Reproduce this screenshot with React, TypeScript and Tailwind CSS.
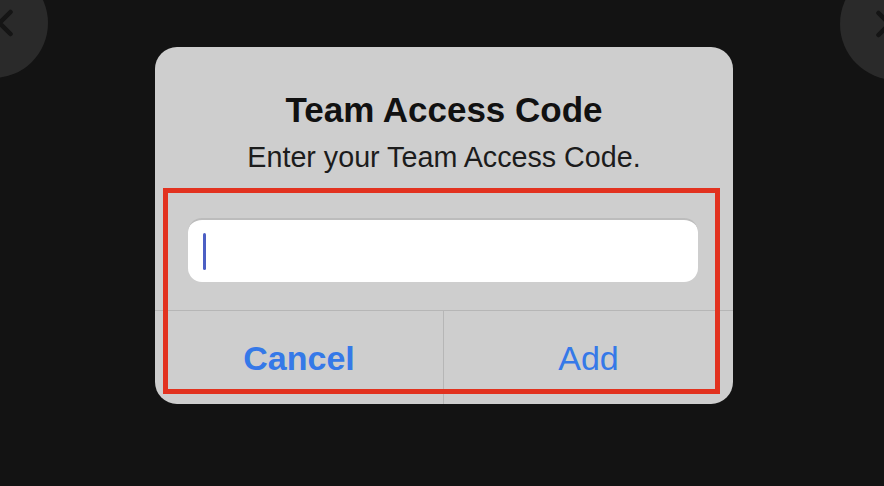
import { ChevronLeft, ChevronRight } from "lucide-react"

export default function App() {
  return (
    <div className="relative w-[884px] h-[486px] overflow-hidden bg-[#131313] font-['Liberation_Sans',Arial,sans-serif]">
      {/* corner nav buttons peeking in */}
      <div className="absolute -left-[62px] -top-[32px] w-[110px] h-[110px] rounded-full bg-[#2a2a2a] flex items-center justify-start pl-[45px]">
        <ChevronLeft className="w-[44px] h-[44px] text-[#151515]" strokeWidth={2.5} />
      </div>
      <div className="absolute left-[840px] -top-[32px] w-[112px] h-[112px] rounded-full bg-[#2a2a2a] flex items-center justify-start pl-[22px]">
        <ChevronRight className="w-[44px] h-[44px] text-[#151515]" strokeWidth={2.5} />
      </div>

      <div className="relative ml-[155px] mt-[47px] w-[578px] h-[357px] rounded-[22px] bg-[#cecece] flex flex-col">
        <div className="pt-[43px] text-center text-[#111]">
          <h1 className="text-[35px] leading-[40px] font-bold">Team Access Code</h1>
          <p className="mt-[10px] text-[28.7px] leading-[34px] text-[#1c1c1c]">Enter your Team Access Code.</p>
        </div>

        <div className="mt-[44px] pl-[33px] pr-[35px]">
          <div className="h-[64px] rounded-[14px] bg-white border-t-2 border-[#bcbcbc] pl-[15px] pt-[13px]">
            <div className="w-[3px] h-[37px] bg-[#4c5fc4] rounded-sm" />
          </div>
        </div>

        <div className="mt-[28px] flex-1 flex border-t border-[#b6b6b6]">
          <button className="w-[288px] flex items-center justify-center text-[34px] leading-[40px] font-bold text-[#3579e8]">
            Cancel
          </button>
          <div className="w-px bg-[#b6b6b6]" />
          <button className="flex-1 flex items-center justify-center text-[34px] leading-[40px] text-[#3579e8]">
            Add
          </button>
        </div>

        {/* red highlight annotation */}
        <div className="absolute left-[8px] top-[141px] w-[557px] h-[206px] border-[5px] border-[#e2321f] pointer-events-none" />
      </div>
    </div>
  )
}
